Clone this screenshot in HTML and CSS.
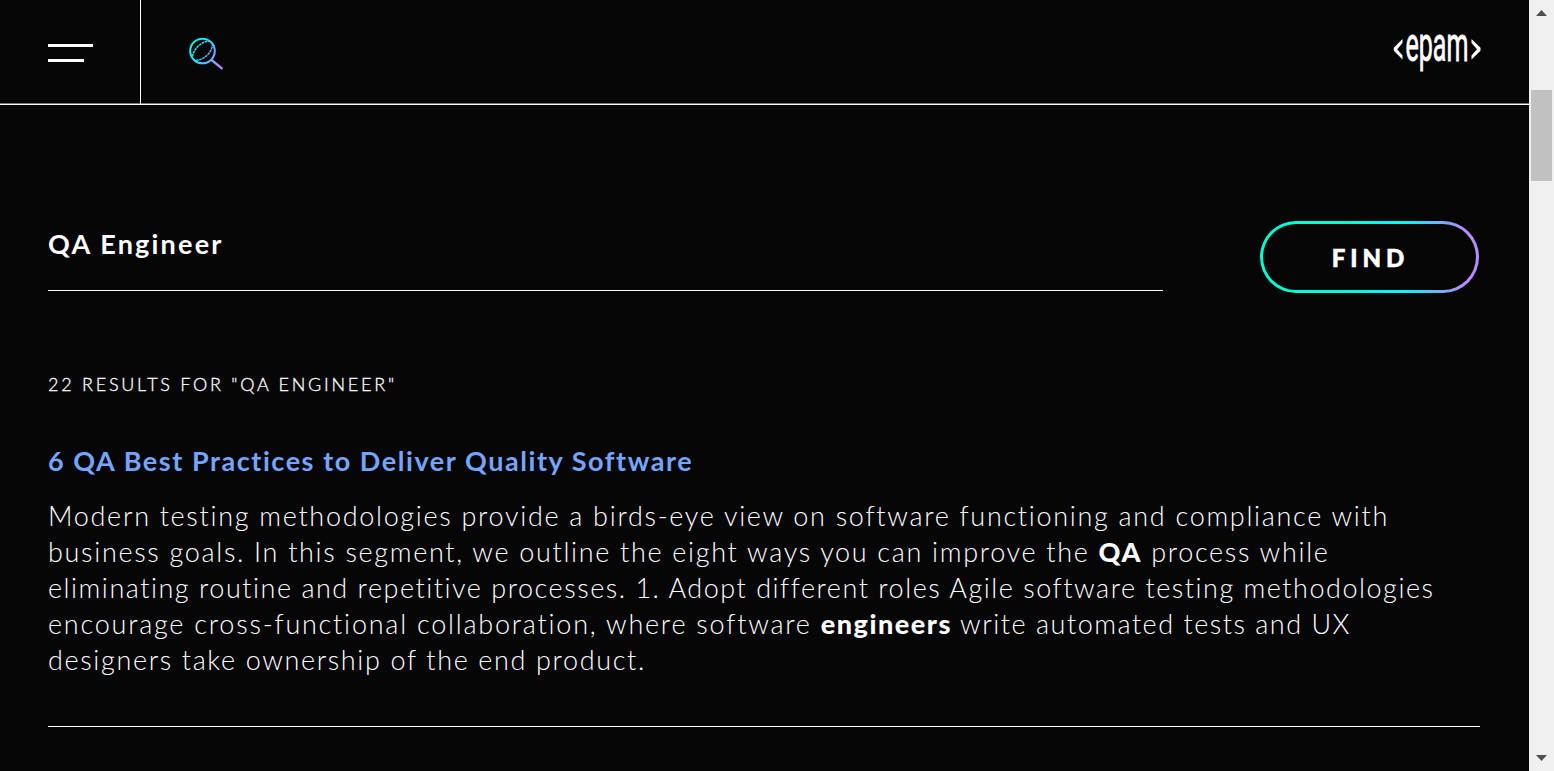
FILE: index.html
```html
<!DOCTYPE html>
<html lang="en">
<head>
<meta charset="utf-8">
<title>Search results</title>
<link rel="stylesheet" href="styles.css">
</head>
<body>
<div class="page">
  <div class="site">
    <header class="header">
      <div class="menu"><span class="bar"></span><span class="bar short"></span></div>
      <svg class="search-icon" width="36" height="36" viewBox="0 0 36 36" fill="none" stroke="url(#lens)" stroke-width="2">
        <defs><linearGradient id="lens" gradientUnits="userSpaceOnUse" x1="2" y1="10" x2="33" y2="28"><stop offset="0" stop-color="#00f6f0"/><stop offset=".35" stop-color="#28e0f8"/><stop offset=".6" stop-color="#62b4ff"/><stop offset="1" stop-color="#b78cff"/></linearGradient></defs>
        <circle cx="14.500" cy="15" r="12.300"/>
        <path d="M23.500 24L34.500 32.800" stroke-width="2.300"/>
        <path d="M4.500 20.500C5.500 13 13.500 5 22 5M8 24.500C16.500 23.500 24 16.500 24.500 8.500" stroke-width="1.500" stroke-dasharray="2.600 .7"/>
      </svg>
      <svg class="logo" width="90" height="72" viewBox="0 -22 90 72">
        <path d="M11.500 6L2.800 14.800V17.700L11.500 26.500V22.500L6.200 16.200L11.500 10ZM80.500 6L89.500 14.800V17.700L80.500 26.500V22.500L86 16.200L80.500 10Z" fill="#fff"/>
        <text class="logo-text" transform="translate(14.500 28) scale(.5 1)" textLength="126" lengthAdjust="spacingAndGlyphs">epam</text>
      </svg>
    </header>
    <main class="content">
      <form class="search">
        <input class="query" value="QA Engineer" aria-label="Search">
        <button class="find" type="button">FIND</button>
      </form>
      <h2 class="count">22 results for "QA Engineer"</h2>
      <article class="result">
        <h3 class="title">6 QA Best Practices to Deliver Quality Software</h3>
        <p class="text">
          <span class="line l1">Modern testing methodologies provide a birds-eye view on software functioning and compliance with</span>
          <span class="line l2">business goals. In this segment, we outline the eight ways you can improve the <b>QA</b> process while</span>
          <span class="line l3">eliminating routine and repetitive processes. 1. Adopt different roles Agile software testing methodologies</span>
          <span class="line l4">encourage cross-functional collaboration, where software <span class="tail"><b>engineers</b> write automated tests and UX</span></span>
          <span class="line l5">designers take ownership of the end product.</span>
        </p>
      </article>
    </main>
  </div>
  <div class="scrollbar">
    <svg class="arrow" width="11" height="6" viewBox="0 0 11 6"><path d="M0 6L5.500 0L11 6Z" fill="#505050"/></svg>
    <div class="thumb"></div>
    <svg class="arrow down" width="11" height="6" viewBox="0 0 11 6"><path d="M0 0L5.500 6L11 0Z" fill="#505050"/></svg>
  </div>
</div>
</body>
</html>
```
FILE: styles.css
```css
* { box-sizing: border-box; }
body { margin: 0; background: #060606; color: #fff; font-family: Lato, sans-serif; overflow: hidden; }
.page { display: flex; height: 771px; }
.site { flex: 1; min-width: 0; }
.header { display: flex; height: 105px; border-bottom: 1px solid #fff; box-shadow: inset 0 -1px #777; }
.menu { width: 141px; height: 104px; border-right: 1px solid #fff; padding: 44px 0 0 48px; display: flex; flex-direction: column; gap: 12px; }
.bar { width: 45px; height: 3px; background: #fff; }
.bar.short { width: 36px; }
.search-icon { margin: 36px 0 0 47px; }
.logo { margin: 11px 48px 0 auto; overflow: visible; }
.logo-text { font: 400 48px Roboto, sans-serif; fill: #fff; stroke: #fff; stroke-width: .8px; }
.content { padding: 116px 49px 0 48px; }
.search { display: flex; justify-content: space-between; height: 72px; margin: 0; padding-right: 1px; }
.query { width: 1115px; height: 70px; padding: 0 0 24px; border: 0; border-bottom: 1px solid #fff; border-radius: 0; background: transparent; color: #fff; font: 700 27px Lato, sans-serif; letter-spacing: 2.2px; outline: 0; }
.find { width: 219px; height: 72px; padding: 0 0 0 2px; border: 3px solid transparent; border-radius: 36px; background: linear-gradient(#060606, #060606) padding-box, linear-gradient(90deg, #00ffd2 0%, #00ffd2 38%, #00f8ff 66%, #62b8ff 80%, #b78cff 94%) border-box; color: #fff; font: 900 24px Lato, sans-serif; letter-spacing: 5px; -webkit-text-stroke: .5px #fff; }
.count { margin: 79px 0 0; font-size: 18px; line-height: 24px; font-weight: 300; letter-spacing: 2.75px; text-transform: uppercase; white-space: nowrap; -webkit-text-stroke: .3px #fff; }
.count, .title { width: max-content; }
.result { border-bottom: 1px solid #fff; padding-bottom: 48px; margin-top: 47px; }
.title { margin: 0 0 19px; color: #76a5ff; font-size: 27px; line-height: 36px; font-weight: 700; letter-spacing: 1.56px; white-space: nowrap; }
.text { margin: 0; font-size: 27px; line-height: 36px; font-weight: 300; }
.text b { font-weight: 900; }
.line { display: block; width: max-content; white-space: nowrap; }
.l1 { letter-spacing: 1.695px; }
.l2 { letter-spacing: 1.68px; }
.l3 { letter-spacing: 1.52px; }
.l4 { letter-spacing: 1.765px; }
.l4 .tail { letter-spacing: 1.51px; }
.l5 { letter-spacing: 1.64px; }
.scrollbar { width: 25px; background: #f0f0f0; display: flex; flex-direction: column; align-items: center; padding: 10px 0; }
.thumb { width: 21px; height: 91px; margin: 74px 2px auto 0; align-self: flex-end; background: #c1c1c1; }
```
